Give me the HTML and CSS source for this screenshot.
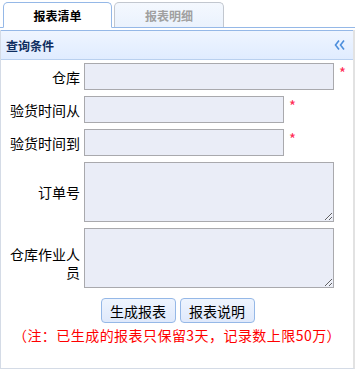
FILE: index.html
```html
<!DOCTYPE html>
<html lang="zh-CN">
<head>
<meta charset="utf-8">
<title>报表清单</title>
<link rel="stylesheet" href="styles.css">
</head>
<body>
<div class="tabs">
  <div class="tab tab-active">报表清单</div>
  <div class="tab tab-inactive">报表明细</div>
</div>
<div class="panel">
  <div class="panel-header">
    <span class="panel-title">查询条件</span>
    <svg class="collapse" width="12" height="12" viewBox="0 0 12 12">
      <polyline points="5,1.5 1.5,6 5,10.5" fill="none" stroke="#4d8fdc" stroke-width="1.6"/>
      <polyline points="10,1.5 6.5,6 10,10.5" fill="none" stroke="#4d8fdc" stroke-width="1.6"/>
    </svg>
  </div>
  <div class="panel-body">
    <div class="row">
      <label class="label">仓库</label>
      <input class="field field-wide" type="text">
      <span class="req">*</span>
    </div>
    <div class="row">
      <label class="label">验货时间从</label>
      <input class="field field-narrow" type="text">
      <span class="req">*</span>
    </div>
    <div class="row">
      <label class="label">验货时间到</label>
      <input class="field field-narrow" type="text">
      <span class="req">*</span>
    </div>
    <div class="row">
      <label class="label">订单号</label>
      <textarea class="field area"></textarea>
    </div>
    <div class="row row-spaced">
      <label class="label label-low">仓库作业人员</label>
      <textarea class="field area"></textarea>
    </div>
    <div class="actions">
      <button class="btn" type="button">生成报表</button>
      <button class="btn" type="button">报表说明</button>
    </div>
    <p class="note">（注：已生成的报表只保留3天，记录数上限50万）</p>
  </div>
</div>
</body>
</html>
```
FILE: styles.css
```css
* { box-sizing: border-box; }
html, body { margin: 0; padding: 0; background: #fff; }
body {
  font-family: "Noto Sans CJK SC", "Noto Sans", sans-serif;
  font-size: 14px;
  color: #000;
  width: 355px;
  height: 369px;
  overflow: hidden;
}
.tabs {
  display: flex;
  align-items: flex-end;
  gap: 2px;
  height: 28px;
  padding-left: 3px;
  border-bottom: 1px solid #95b8e7;
}
.tab {
  height: 26px;
  margin-bottom: -1px;
  border-radius: 5px 5px 0 0;
  font-size: 12px;
  font-weight: bold;
  line-height: 25px;
  text-align: center;
}
.tab-active {
  width: 109px;
  background: #fff;
  border: 1px solid #95b8e7;
  border-bottom: 1px solid #fff;
  color: #000;
}
.tab-inactive {
  width: 110px;
  height: 25px;
  margin-bottom: 0;
  background: linear-gradient(to bottom, #f4f8fe 0%, #eaf2fd 100%);
  border: 1px solid #c2c7cf;
  border-bottom: none;
  color: #a0a0a0;
}
.panel {
  margin-top: 2px;
  height: 339px;
  border-left: 1px solid #d4dbe6;
  border-right: 2px solid #e2e2e2;
  border-bottom: 1px solid #d4dbe6;
}
.panel-header {
  display: flex;
  align-items: center;
  justify-content: space-between;
  height: 30px;
  padding: 0 7px 0 5px;
  border-top: 1px solid #95b8e7;
  border-bottom: 1px solid #b9d0ef;
  background: linear-gradient(to bottom, #eff5ff 0%, #e0ecff 100%);
}
.panel-title {
  font-size: 12px;
  font-weight: bold;
  color: #0e2d5f;
}
.collapse { display: block; }
.panel-body {
  padding-top: 3px;
}
.row {
  display: flex;
  align-items: center;
  margin-bottom: 6px;
}
.row-spaced { margin-top: 4px; }
.label {
  flex: 0 0 83px;
  padding: 0 4px 0 9px;
  text-align: right;
  line-height: 18px;
  font-size: 14px;
}
.label-low { padding-top: 10px; }
.field {
  display: block;
  margin: 0;
  background: #eaedf7;
  border: 1px solid #a9a9ad;
  border-radius: 0;
  font-family: inherit;
  font-size: 14px;
}
.field-wide { width: 250px; height: 27px; }
.field-narrow { width: 200px; height: 27px; }
.area { width: 250px; height: 60px; resize: both; }
.req {
  align-self: flex-start;
  margin-left: 5px;
  padding-top: 3px;
  color: #ff2a55;
  font-size: 15px;
  line-height: 14px;
}
.actions {
  display: flex;
  justify-content: center;
  gap: 4px;
  margin-top: 10px;
  padding-left: 1px;
}
.btn {
  width: 75px;
  height: 25px;
  padding: 0;
  border: 1px solid #95b8e7;
  border-radius: 4px;
  background: linear-gradient(to bottom, #eef4fe 0%, #dfe9fb 100%);
  color: #000;
  font-family: inherit;
  font-size: 14px;
  line-height: 22px;
}
.note {
  margin: 5px 0 0;
  text-align: center;
  color: #ff0000;
  font-size: 14px;
  line-height: 14px;
  letter-spacing: 0.45px;
  white-space: nowrap;
}
```
